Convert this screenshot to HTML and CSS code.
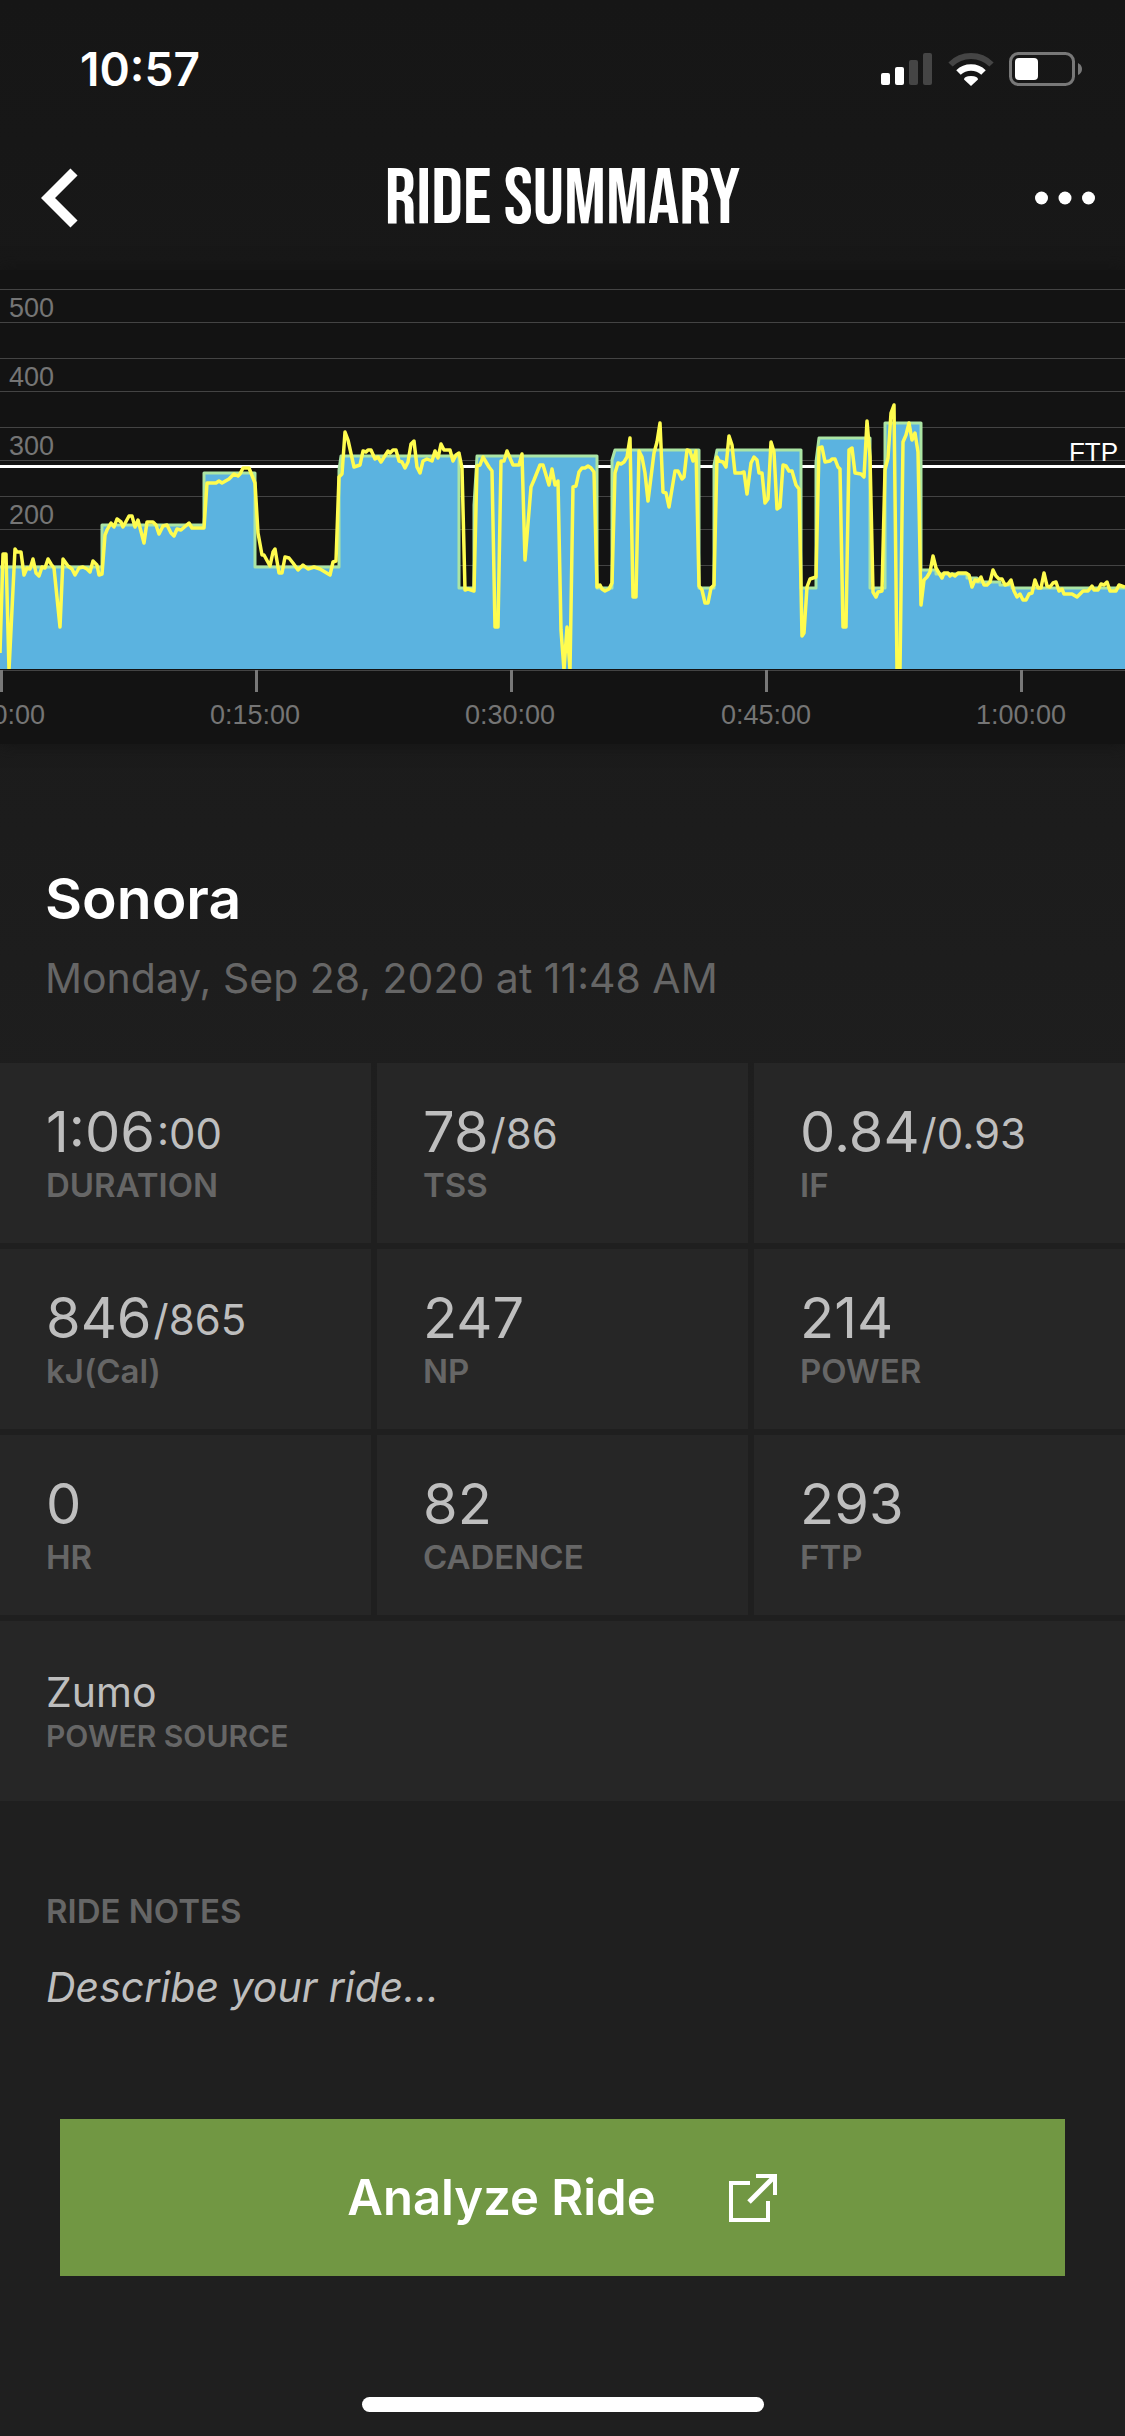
FILE: index.html
```html
<!DOCTYPE html>
<html lang="en">

<head>
    <meta charset="UTF-8">
    <meta name="viewport" content="width=device-width, initial-scale=1.0">
    <title>Ride Summary</title>
    <link rel="stylesheet" href="styles.css">
</head>

<body>
    <div class="status-bar">
        <span class="time">10:57</span>
        <div class="status-icons">
            <svg width="52" height="34" viewBox="0 0 52 34" fill="#fff">
                <rect x="0" y="21" width="9" height="12" rx="2" />
                <rect x="14" y="15" width="9" height="18" rx="2" />
                <rect x="28" y="8" width="9" height="25" rx="2" fill="#454545" />
                <rect x="42" y="1" width="9" height="32" rx="2" fill="#454545" />
            </svg>
            <svg width="46" height="34" viewBox="0 0 46 34" fill="none">
                <path d="M2.500 12.500A29 29 0 0 1 43.500 12.500" stroke="#454545" stroke-width="6" />
                <path d="M10.500 20.500A18 18 0 0 1 35.500 20.500" stroke="#fff" stroke-width="6.500" />
                <path d="M16 27.500Q16 24 23 24Q30 24 30 27.500L23 34z" fill="#fff" />
            </svg>
            <svg width="74" height="34" viewBox="0 0 74 34">
                <rect x="1.500" y="1.500" width="63" height="31" rx="8" fill="none" stroke="#787878" stroke-width="3" />
                <rect x="6" y="6" width="23" height="22" rx="4" fill="#fff" />
                <path d="M69 11Q73 13 73 17T69 23z" fill="#787878" />
            </svg>
        </div>
    </div>

    <header class="header">
        <button class="icon-btn" aria-label="Back">
            <svg width="38" height="60" viewBox="0 0 38 60" fill="none" stroke="#fff" stroke-width="10">
                <path d="M33 4L7 30L33 56" />
            </svg>
        </button>
        <h1>RIDE SUMMARY</h1>
        <button class="icon-btn" aria-label="More">
            <svg width="60" height="14" viewBox="0 0 60 14" fill="#fff">
                <circle cx="6.500" cy="7" r="6.500" />
                <circle cx="30" cy="7" r="6.500" />
                <circle cx="53.500" cy="7" r="6.500" />
            </svg>
        </button>
    </header>

    <svg class="chart" viewBox="0 0 1125 474">
        <path class="grid" d="M0 19.500H1125M0 52.500H1125M0 88.500H1125M0 121.500H1125M0 157.500H1125M0 190.500H1125M0 226.500H1125M0 259.500H1125M0 295.500H1125" />
        <path class="ftp-line" d="M0 196.500H1125" />
        <g class="axis">
            <text x="9" y="47">500</text>
            <text x="9" y="116">400</text>
            <text x="9" y="185">300</text>
            <text x="9" y="254">200</text>
        </g>

        <!-- planned power -->
        <path class="target" d="M-4 402V297H102V255H204V203H255V297H339V200L341 186H459V318H474V235L477 186H597V318H612V190L615 180H699V318H714V195L717 180H801V318H816V192L819 168H870V318H885V153H921V300H936V304H967V308H977V312H1000V315H1012V318H1129V402z" />

        <!-- recorded power -->
        <polyline class="power" points="0,383 3,284 6,284 9,400 15,279 17,282 21,282 24,305 27,298 30,299 33,289 36,303 39,306 42,297 45,298 48,289 51,294 54,298 60,357 63,289 68,296 72,299 75,305 79,298 83,297 87,299 90,302 93,291 97,295 99,305 102,304
            105,265 107,260 111,253 114,257 117,249 121,252 123,257 129,246 132,246 135,257 138,250 144,273 147,252 153,252 156,255 159,264 163,256 167,255 171,263 174,266 177,259 181,260 189,253 192,258 204,258
            207,213 216,213 219,211 222,213 229,209 234,204 238,206 240,204 243,198 249,198 251,203 255,213
            258,263 262,285 264,285 270,296 273,282 275,279 279,303 282,303 285,287 289,288 293,293 298,300 303,295 308,299 314,297 320,299 330,305 333,292 336,291
            339,207 342,204 345,162 348,170 354,197 360,195 363,181 366,182 368,180 371,180 375,189 378,187 381,192 388,181 390,183 393,180 396,180 399,191 402,192 405,198 408,192 411,174 414,171 417,197 420,203 423,191 427,189 432,191 435,181 438,188 441,174 444,180 450,180 453,191 456,185 459,183 462,198
            465,320 468,319 474,321 477,196 480,195 483,187 489,197 492,201 495,357 498,357 501,191 504,191 507,181 510,188 513,195 519,195 522,184 525,290 531,217 534,210 540,195 543,195 549,215 552,199 555,215 558,211 561,360 564,400 567,357 570,400 573,217 576,216 579,202 582,198 585,198 588,196 591,198 594,202
            597,317 600,315 602,319 605,321 609,319 612,313 615,203 618,193 621,194 624,192 627,187 630,168 633,327 636,327 639,181 642,187 645,203 648,231 654,183 657,172 660,153 663,222 666,223 669,237 675,201 678,201 682,209 684,207 687,180 690,181 693,191 696,181
            699,316 702,320 705,333 708,333 711,318 714,315 717,187 719,191 723,192 726,197 729,166 732,175 735,203 741,203 744,202 747,224 751,193 754,187 757,190 759,203 762,203 765,233 768,229 771,172 774,182 777,239 780,237 783,195 786,196 789,201 792,201 796,215 799,219
            802,366 804,363 807,317 810,309 813,308 816,307 819,178 822,177 825,192 830,191 832,189 835,189 838,197 840,199 843,357 846,357 849,180 852,178 855,203 861,204 864,207 867,151 870,187
            873,322 876,327 878,322 882,321 885,200 888,188 891,143 894,135 897,400 900,400 903,172 906,165 909,153 912,170 915,163 918,182
            921,335 924,310 927,307 930,302 933,286 936,298 942,308 944,303 948,303 950,306 952,304 955,306 958,303 966,303 969,305 972,317 975,310 978,311 981,307 984,315 987,315 990,312 993,300 996,306 999,309 1002,309 1005,315 1008,314 1011,310 1014,321 1017,327 1020,324 1023,330 1026,330 1029,324 1032,323 1035,310 1038,318 1041,318 1044,303 1047,316 1050,317 1053,313 1056,312 1059,321 1062,319 1064,324 1072,324 1077,327 1083,321 1088,321 1092,316 1094,320 1098,320 1101,314 1104,315 1107,312 1110,321 1116,321 1119,315 1125,317" />
        <rect class="floor" x="0" y="399" width="1125" height="6" />
        <path class="grid" d="M0 400.500H1125" />
        <text class="ftp-label" x="1118" y="191">FTP</text>

        <path class="ticks" d="M1.500 400V422M256.500 400V422M511.500 400V422M766.500 400V422M1021.500 400V422" />
        <g class="axis times">
            <text x="0" y="454">0:00:00</text>
            <text x="255" y="454">0:15:00</text>
            <text x="510" y="454">0:30:00</text>
            <text x="766" y="454">0:45:00</text>
            <text x="1021" y="454">1:00:00</text>
        </g>
    </svg>

    <main>
        <section class="ride">
            <h2>Sonora</h2>
            <p>Monday, Sep 28, 2020 at 11:48 AM</p>
        </section>

        <dl class="stats">
            <div class="stat">
                <dt>DURATION</dt>
                <dd>1:06<small>:00</small></dd>
            </div>
            <div class="stat">
                <dt>TSS</dt>
                <dd>78<small>/86</small></dd>
            </div>
            <div class="stat">
                <dt>IF</dt>
                <dd>0.84<small>/0.93</small></dd>
            </div>
            <div class="stat">
                <dt>kJ(Cal)</dt>
                <dd>846<small>/865</small></dd>
            </div>
            <div class="stat">
                <dt>NP</dt>
                <dd>247</dd>
            </div>
            <div class="stat">
                <dt>POWER</dt>
                <dd>214</dd>
            </div>
            <div class="stat">
                <dt>HR</dt>
                <dd>0</dd>
            </div>
            <div class="stat">
                <dt>CADENCE</dt>
                <dd>82</dd>
            </div>
            <div class="stat">
                <dt>FTP</dt>
                <dd>293</dd>
            </div>
            <div class="stat source">
                <dt>POWER SOURCE</dt>
                <dd>Zumo</dd>
            </div>
        </dl>

        <section class="notes">
            <label for="notes">RIDE NOTES</label>
            <input type="text" id="notes" placeholder="Describe your ride...">
        </section>

        <button class="analyze">
            Analyze Ride
            <svg width="50" height="50" viewBox="0 0 50 50" fill="none" stroke="#fff" stroke-width="4">
                <path d="M22 10H3V47H40V28" />
                <path d="M28 3H47V22" />
                <path d="M47 3L21 29" stroke-width="5" />
            </svg>
        </button>
    </main>

    <div class="home-bar"></div>
</body>

</html>
```
FILE: styles.css
```css
* {
    box-sizing: border-box;
}

body {
    display: flex;
    flex-direction: column;
    min-height: 100vh;
    margin: 0;
    background: linear-gradient(#161616, #1c1c1c 34%, #1f1f1f 50%, #1f1f1f);
    color: #fff;
    font-family: Inter, "Liberation Sans", sans-serif;
}

h1,
h2,
p,
dl,
dd {
    margin: 0;
}

button {
    padding: 0;
    border: 0;
    color: inherit;
    font-family: inherit;
}

svg {
    display: block;
}

.status-bar {
    display: flex;
    justify-content: space-between;
    align-items: center;
    height: 138px;
    padding: 0 42px 0 80px;
}

.time {
    font-size: 46px;
    font-weight: 600;
}

.status-icons {
    display: flex;
    gap: 15px;
}

.header {
    display: flex;
    justify-content: space-between;
    align-items: center;
    height: 120px;
    padding: 0 30px;
}

.header h1 {
    padding-top: 4px;
    font-family: "Bebas Neue", "Roboto Condensed", "Liberation Sans Narrow", "Liberation Sans", sans-serif;
    font-size: 78px;
    font-weight: 400;
    line-height: 90px;
}

.icon-btn {
    display: flex;
    justify-content: center;
    width: 60px;
    background: none;
}

.chart {
    width: 100%;
    margin-top: 12px;
    background: #131313;
    box-shadow: 0 0 16px #131313;
}

.grid {
    stroke: #444;
}

.ftp-line {
    stroke: #fff;
    stroke-width: 3;
}

.axis,
.ftp-label {
    font-family: "Liberation Sans", sans-serif;
    font-size: 27px;
}

.axis {
    fill: #757575;
}

.times {
    text-anchor: middle;
}

.ftp-label {
    fill: #fff;
    font-size: 26px;
    text-anchor: end;
}

.target {
    fill: #5bb3e0;
    stroke: #abe5a4;
    stroke-width: 3;
    stroke-linejoin: round;
}

.power {
    fill: none;
    stroke: #fffc4f;
    stroke-width: 3.5;
    stroke-linejoin: round;
}

.floor {
    fill: #131313;
}

.ticks {
    stroke: #787878;
    stroke-width: 3;
}

.ride {
    padding: 119px 45px 58px;
}

.ride h2 {
    font-size: 57px;
    font-weight: 600;
    line-height: 72px;
}

.ride p {
    margin-top: 16px;
    color: #666;
    font-size: 41px;
    line-height: 54px;
}

.stats {
    display: grid;
    grid-template-columns: repeat(3, 1fr);
    gap: 6px;
}

.stat {
    display: flex;
    flex-direction: column-reverse;
    justify-content: center;
    height: 180px;
    padding: 0 0 5px 46px;
    background: #262626;
}

.stat dd {
    display: flex;
    align-items: center;
    gap: 2px;
    color: #bebebe;
    font-size: 56px;
    line-height: 68px;
}

.stat small {
    padding-top: 4px;
    font-size: 42px;
    line-height: 60px;
}

.stat dt,
.notes label {
    color: #666;
    font-size: 33px;
    font-weight: 600;
    line-height: 38px;
}

.stat.source {
    grid-column: 1 / -1;
    padding-bottom: 0;
}

.source dd {
    font-size: 41px;
    line-height: 50px;
}

.source dt {
    font-size: 30px;
}

.notes {
    display: flex;
    flex-direction: column;
    gap: 27px;
    padding: 91px 46px 102px;
}

.notes input {
    height: 60px;
    padding: 0;
    border: 0;
    outline: 0;
    background: none;
    color: #bebebe;
    font: italic 41px Inter, "Liberation Sans", sans-serif;
}

.notes input::placeholder {
    color: #bebebe;
}

.analyze {
    display: flex;
    justify-content: center;
    align-items: center;
    gap: 72px;
    width: calc(100% - 120px);
    height: 157px;
    margin: 0 60px;
    background: #719743;
    font-size: 49px;
    font-weight: 600;
}

.home-bar {
    width: 402px;
    height: 15px;
    margin: auto auto 24px;
    border-radius: 8px;
    background: #fff;
}
```
